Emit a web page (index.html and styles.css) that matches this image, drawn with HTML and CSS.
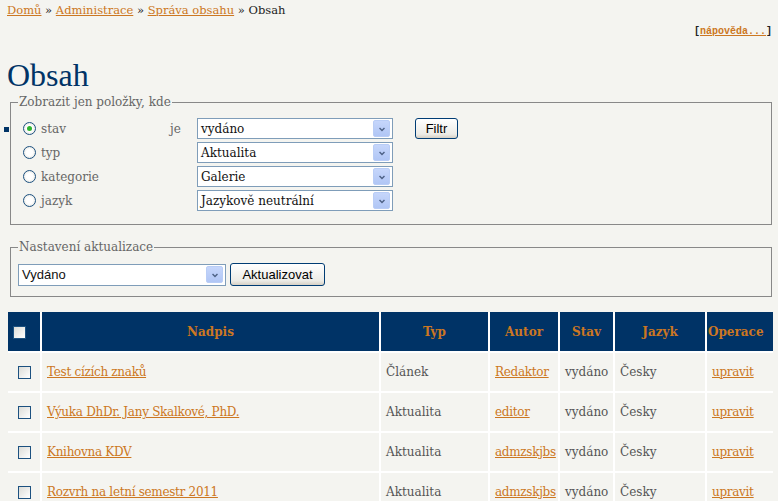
FILE: index.html
```html
<!DOCTYPE html>
<html lang="cs">
<head>
<meta charset="utf-8">
<title>Obsah</title>
<link rel="stylesheet" href="styles.css">
</head>
<body>
<div class="crumbs"><a href="#">Domů</a> » <a href="#">Administrace</a> » <a href="#">Správa obsahu</a> » Obsah</div>
<div class="help">[<a href="#">nápověda...</a>]</div>
<h1>Obsah</h1>
<div class="filter-wrap">
  <span class="marker"></span>
  <fieldset class="box filter">
    <legend>Zobrazit jen položky, kde</legend>
    <div class="filter-grid">
      <div class="rows">
        <div class="row">
          <span class="radio checked"></span><span class="lbl">stav</span><span class="je">je</span>
          <div class="select w195"><span class="val">vydáno</span><span class="arrow"><svg width="17" height="17" viewBox="0 0 17 17"><path d="M5 7l3.5 3.5L12 7" fill="none" stroke="#4d6185" stroke-width="2"/></svg></span></div>
        </div>
        <div class="row">
          <span class="radio"></span><span class="lbl">typ</span><span class="je"></span>
          <div class="select w195"><span class="val">Aktualita</span><span class="arrow"><svg width="17" height="17" viewBox="0 0 17 17"><path d="M5 7l3.5 3.5L12 7" fill="none" stroke="#4d6185" stroke-width="2"/></svg></span></div>
        </div>
        <div class="row">
          <span class="radio"></span><span class="lbl">kategorie</span><span class="je"></span>
          <div class="select w195"><span class="val">Galerie</span><span class="arrow"><svg width="17" height="17" viewBox="0 0 17 17"><path d="M5 7l3.5 3.5L12 7" fill="none" stroke="#4d6185" stroke-width="2"/></svg></span></div>
        </div>
        <div class="row">
          <span class="radio"></span><span class="lbl">jazyk</span><span class="je"></span>
          <div class="select w195"><span class="val">Jazykově neutrální</span><span class="arrow"><svg width="17" height="17" viewBox="0 0 17 17"><path d="M5 7l3.5 3.5L12 7" fill="none" stroke="#4d6185" stroke-width="2"/></svg></span></div>
        </div>
      </div>
      <button class="btn filtr">Filtr</button>
    </div>
  </fieldset>
</div>
<fieldset class="box update">
  <legend>Nastavení aktualizace</legend>
  <div class="update-row">
    <div class="select w207 sans"><span class="val">Vydáno</span><span class="arrow"><svg width="17" height="17" viewBox="0 0 17 17"><path d="M5 7l3.5 3.5L12 7" fill="none" stroke="#4d6185" stroke-width="2"/></svg></span></div>
    <button class="btn akt">Aktualizovat</button>
  </div>
</fieldset>
<table class="list">
  <colgroup>
    <col class="k-chk"><col class="k-title"><col class="k-typ"><col class="k-aut"><col class="k-stav"><col class="k-jaz"><col class="k-op">
  </colgroup>
  <thead>
    <tr>
      <th class="c-chk"><span class="chk hd"></span></th>
      <th>Nadpis</th>
      <th>Typ</th>
      <th>Autor</th>
      <th>Stav</th>
      <th>Jazyk</th>
      <th class="c-left">Operace</th>
    </tr>
  </thead>
  <tbody>
    <tr>
      <td class="c-chk"><span class="chk"></span></td>
      <td><a href="#">Test cízích znaků</a></td>
      <td>Článek</td>
      <td><a href="#">Redaktor</a></td>
      <td>vydáno</td>
      <td>Česky</td>
      <td><a href="#">upravit</a></td>
    </tr>
    <tr>
      <td class="c-chk"><span class="chk"></span></td>
      <td><a href="#">Výuka DhDr. Jany Skalkové, PhD.</a></td>
      <td>Aktualita</td>
      <td><a href="#">editor</a></td>
      <td>vydáno</td>
      <td>Česky</td>
      <td><a href="#">upravit</a></td>
    </tr>
    <tr>
      <td class="c-chk"><span class="chk"></span></td>
      <td><a href="#">Knihovna KDV</a></td>
      <td>Aktualita</td>
      <td><a href="#">admzskjbs</a></td>
      <td>vydáno</td>
      <td>Česky</td>
      <td><a href="#">upravit</a></td>
    </tr>
    <tr>
      <td class="c-chk"><span class="chk"></span></td>
      <td><a href="#">Rozvrh na letní semestr 2011</a></td>
      <td>Aktualita</td>
      <td><a href="#">admzskjbs</a></td>
      <td>vydáno</td>
      <td>Česky</td>
      <td><a href="#">upravit</a></td>
    </tr>
  </tbody>
</table>
</body>
</html>
```
FILE: styles.css
```css
html, body { margin: 0; padding: 0; }
body {
  background: #f4f4f0;
  font-family: "DejaVu Serif", serif;
  font-size: 12px;
  color: #555;
  padding: 0 6px 0 7px;
  overflow: hidden;
}
a { color: #cc7722; }
.crumbs { color: #222; padding-top: 3px; height: 18px; font-size: 11.5px; }
.help {
  text-align: right;
  font-family: "Liberation Mono", monospace;
  font-size: 10px;
  font-weight: bold;
  color: #222;
  margin-top: 3px;
  height: 16px;
  line-height: 16px;
}
h1 {
  font-family: "Liberation Serif", serif;
  font-weight: normal;
  color: #003366;
  font-size: 32px;
  margin: 17px 0 0 0;
  height: 38px;
  line-height: 37px;
}
.filter-wrap { position: relative; }
.marker {
  position: absolute; left: -3px; top: 32px;
  width: 5px; height: 5px; background: #003366;
}
.box {
  border: 1px solid #888;
  margin: 0 0 0 3px;
  padding: 0;
  color: #666;
}
.box legend {
  padding: 0 1px;
  margin-left: 7px;
  color: #666;
  font-size: 12px;
}
.filter { height: 128px; }
.filter-grid { display: flex; align-items: flex-start; }
.rows { display: flex; flex-direction: column; gap: 3px; padding: 9px 0 0 12px; }
.row { display: flex; align-items: center; height: 21px; }
.radio {
  width: 11px; height: 11px; border: 1px solid #1c5180; border-radius: 50%;
  background: radial-gradient(circle, #fff 40%, #dcdcd4 100%);
  box-sizing: content-box;
  position: relative;
}
.radio.checked::after {
  content: ""; position: absolute; left: 3px; top: 3px; width: 5px; height: 5px; border-radius: 50%;
  background: #2fb52f;
}
.lbl { width: 129px; padding-left: 5px; }
.je { width: 27px; }
.select {
  display: flex; align-items: center; justify-content: space-between;
  height: 19px; border: 1px solid #7f9db9; background: #fff;
  color: #111; font-size: 12px; box-sizing: content-box;
}
.select .val { padding-left: 3px; white-space: nowrap; }
.select .arrow {
  width: 15px; height: 15px; margin-right: 2px;
  background: linear-gradient(#c6d6fb, #b0c6f5);
  border: 1px solid #b9cdf6; border-radius: 2px;
  display: flex; align-items: center; justify-content: center;
}
.select .arrow svg { width: 12px; height: 12px; }
.w195 { width: 194px; }
.w207 { width: 206px; }
.sans { font-family: "Liberation Sans", sans-serif; font-size: 13px; height: 20px; }
.btn {
  font-family: "Liberation Sans", sans-serif; font-size: 13px; color: #000;
  border: 1px solid #003c74; border-radius: 3px;
  background: linear-gradient(#fff, #ecebe6 80%, #d6d0c5);
  padding: 0; height: 21px;
}
.filtr { width: 43px; margin: 9px 0 0 22px; }
.update { height: 55px; margin-top: 15px; }
.update-row { display: flex; align-items: center; gap: 4px; padding: 9px 0 0 7px; }
.akt { width: 95px; height: 23px; }
table.list {
  border-collapse: collapse;
  table-layout: fixed;
  margin: 15px 0 0 1px;
  width: 765px;
}
.k-chk { width: 33px; }
.k-title { width: 339px; }
.k-typ { width: 109px; }
.k-aut { width: 70px; }
.k-stav { width: 55px; }
.k-jaz { width: 92px; }
.k-op { width: 67px; }
.list th, .list td { border: 2px solid #fff; }
.list tr:first-child th { border-top: 0; }
.list th:first-child, .list td:first-child { border-left: 0; }
.list th:last-child, .list td:last-child { border-right: 0; }
.list th {
  background: #003366; color: #cc7722; font-weight: bold; height: 39px;
  font-size: 12px; padding: 0;
}
.list th.c-left { text-align: left; padding-left: 1px; }
.list th.c-chk { text-align: left; padding-left: 5px; }
.list td { height: 38px; padding: 0 0 0 5px; color: #555; white-space: nowrap; overflow: visible; }
.list td a { letter-spacing: -0.3px; }
.list td.c-chk { padding: 0; text-align: center; }
.chk {
  display: inline-block; width: 11px; height: 11px; border: 1px solid #1c5180;
  background: linear-gradient(135deg, #dcdcd7, #fff);
  vertical-align: middle;
}
```
